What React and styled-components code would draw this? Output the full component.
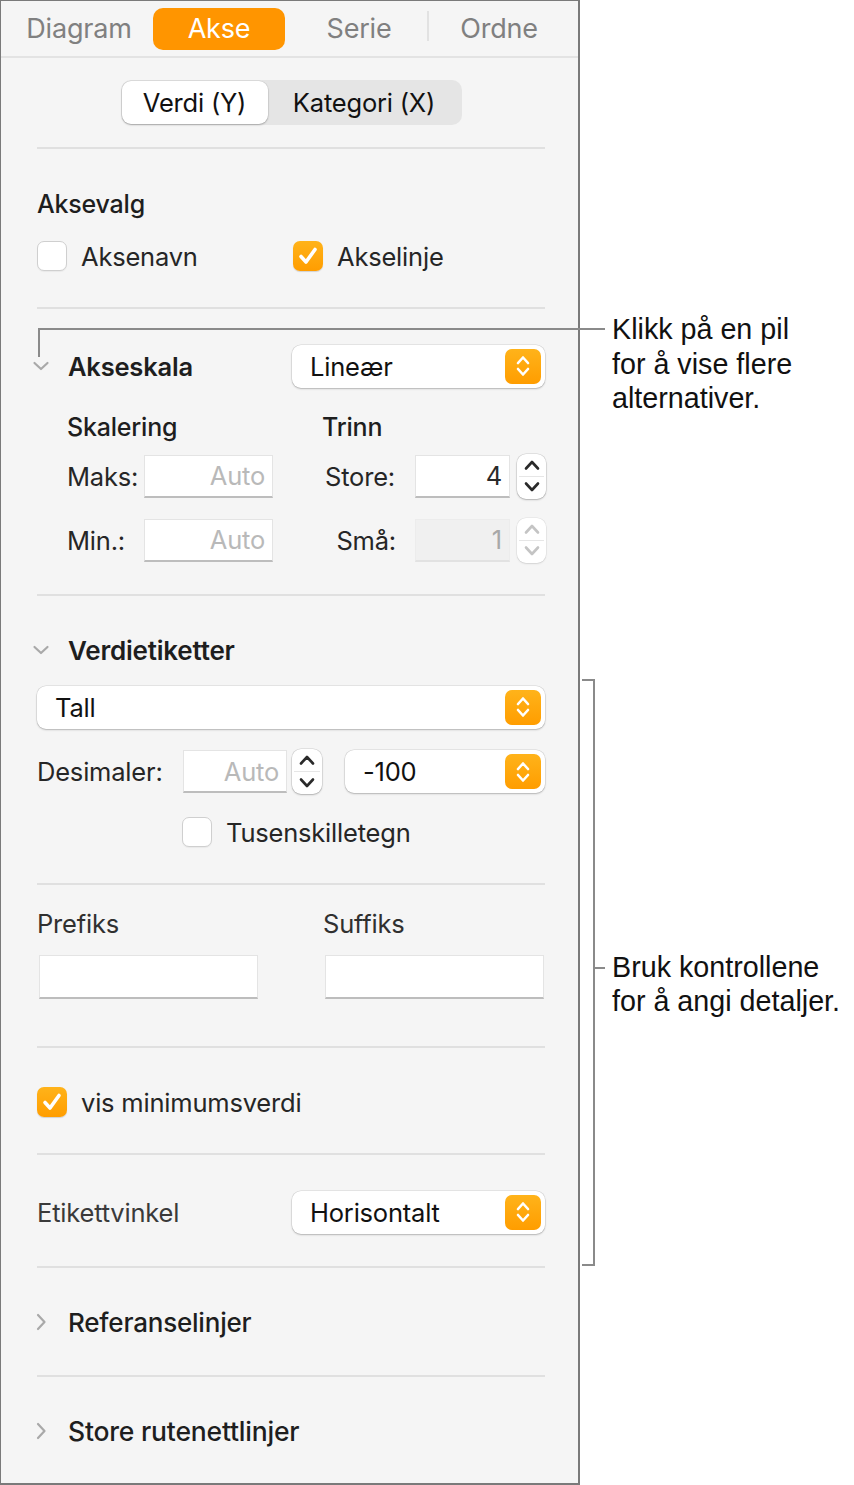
import React from "react";
import styled, { createGlobalStyle } from "styled-components";

const Global = createGlobalStyle`
  html, body { margin: 0; padding: 0; background: #ffffff; }
  body { font-family: Inter, "Noto Sans", sans-serif; -webkit-font-smoothing: antialiased; }
  * { box-sizing: border-box; }
`;

const Page = styled.div`
  display: flex;
  width: 854px;
  height: 1485px;
  background: #fff;
`;

const Panel = styled.div`
  width: 580px;
  height: 1485px;
  flex: none;
  background: #f5f5f5;
  border: 2px solid #7a7a7a;
  border-top-width: 1px;
  border-left-width: 1px;
  display: flex;
  flex-direction: column;
  color: #242424;
  font-size: 25.5px;
  letter-spacing: -0.2px;
`;

const TabBar = styled.div`
  height: 57px;
  flex: none;
  display: flex;
  align-items: center;
  padding-left: 8px;
  border-bottom: 2px solid #e3e3e3;
`;

const Tab = styled.div`
  width: 140px;
  display: flex;
  justify-content: center;
  align-items: center;
  position: relative;
  font-size: 27px;
  color: ${(p) => (p.$active ? "#ffffff" : "#808080")};
  &::after {
    content: "";
    display: ${(p) => (p.$divider ? "block" : "none")};
    position: absolute;
    right: 0;
    top: -1px;
    width: 2px;
    height: 30px;
    background: #e2e2e2;
  }
`;

const TabPill = styled.div`
  width: 132px;
  height: 42px;
  border-radius: 10px;
  background: ${(p) => (p.$active ? "#ff9500" : "transparent")};
  display: flex;
  align-items: center;
  justify-content: center;
`;

const Content = styled.div`
  padding: 0 33px 0 36px;
  display: flex;
  flex-direction: column;
`;

const Section = styled.div`
  display: flex;
  flex-direction: column;
  padding-top: ${(p) => p.$pt}px;
  padding-bottom: ${(p) => p.$pb}px;
  border-bottom: ${(p) => (p.$last ? "none" : "2px solid #e0e0e0")};
`;

const SegWrap = styled.div`
  display: flex;
  justify-content: center;
  padding: 22px 0 22px;
  border-bottom: 2px solid #e0e0e0;
`;

const Segmented = styled.div`
  width: 341px;
  height: 45px;
  border-radius: 10px;
  background: #e5e5e5;
  display: flex;
  align-items: center;
  padding: 1px;
`;

const Segment = styled.div`
  height: 43px;
  width: ${(p) => p.$w}px;
  border-radius: 9px;
  display: flex;
  align-items: center;
  justify-content: center;
  font-size: 25.5px;
  color: #111;
  background: ${(p) => (p.$on ? "#fff" : "transparent")};
  box-shadow: ${(p) => (p.$on ? "0 1px 2px rgba(0,0,0,0.25), 0 0 0 0.5px rgba(0,0,0,0.08)" : "none")};
`;

const Row = styled.div`
  display: flex;
  align-items: center;
  height: ${(p) => p.$h || 30}px;
  margin-top: ${(p) => p.$mt || 0}px;
  padding-left: ${(p) => p.$pl || 0}px;
`;

const Title = styled.div`
  font-weight: ${(p) => p.$w || 500};
  color: ${(p) => p.$c || "#1e1e1e"};
  width: ${(p) => (p.$width ? p.$width + "px" : "auto")};
  font-size: ${(p) => p.$fs || 25}px;
`;

const Label = styled.div`
  color: ${(p) => p.$c || "#262626"};
  width: ${(p) => (p.$width ? p.$width + "px" : "auto")};
  text-align: ${(p) => p.$align || "left"};
  flex: none;
`;

const CheckItem = styled.div`
  display: flex;
  align-items: center;
  gap: 14px;
  width: ${(p) => (p.$width ? p.$width + "px" : "auto")};
  color: #262626;
`;

const Box = styled.div`
  width: 30px;
  height: 30px;
  border-radius: 7px;
  flex: none;
  display: flex;
  align-items: center;
  justify-content: center;
  background: ${(p) => (p.$on ? "linear-gradient(#ffb31a, #ff9d00)" : "#fff")};
  border: ${(p) => (p.$on ? "none" : "1px solid #cfcfcf")};
  box-shadow: ${(p) => (p.$on ? "0 1px 1px rgba(0,0,0,0.15)" : "0 1px 1px rgba(0,0,0,0.05)")};
`;

const Popup = styled.div`
  width: ${(p) => (p.$w ? p.$w + "px" : "auto")};
  flex: ${(p) => (p.$w ? "none" : "1")};
  margin-left: ${(p) => (p.$auto ? "auto" : "0")};
  height: 43px;
  border-radius: 9px;
  background: #fff;
  box-shadow: 0 1px 2px rgba(0,0,0,0.22), 0 0 0 0.5px rgba(0,0,0,0.12);
  display: flex;
  align-items: center;
  justify-content: space-between;
  padding: 0 4px 0 18px;
  color: #111;
  font-size: 25.5px;
`;

const PopupKnob = styled.div`
  width: 36px;
  height: 35px;
  border-radius: 7px;
  background: linear-gradient(#ffb31a, #ff9d00);
  display: flex;
  align-items: center;
  justify-content: center;
`;

const Field = styled.div`
  width: ${(p) => p.$w}px;
  height: ${(p) => p.$h || 43}px;
  flex: none;
  margin-left: ${(p) => p.$ml || 0}px;
  background: ${(p) => (p.$disabled ? "#f0f0f0" : "#fff")};
  border: 1px solid ${(p) => (p.$disabled ? "#ececec" : "#e4e4e4")};
  border-bottom: 2px solid ${(p) => (p.$disabled ? "#e2e2e2" : "#bdbdbd")};
  display: flex;
  align-items: center;
  justify-content: flex-end;
  padding-right: 7px;
  color: ${(p) => (p.$ph ? "#b9b9b9" : p.$disabled ? "#a8a8a8" : "#2a2a2a")};
  font-size: 25.5px;
`;

const Stepper = styled.div`
  width: ${(p) => p.$w || 29}px;
  height: 45px;
  flex: none;
  margin-left: ${(p) => p.$ml || 0}px;
  border-radius: 9px;
  background: #fff;
  box-shadow: 0 1px 2px rgba(0,0,0,${(p) => (p.$disabled ? 0.1 : 0.22)}), 0 0 0 0.5px rgba(0,0,0,${(p) => (p.$disabled ? 0.08 : 0.14)});
  display: flex;
  flex-direction: column;
  align-items: center;
  justify-content: space-around;
  position: relative;
  &::after {
    content: "";
    position: absolute;
    left: 2px;
    right: 2px;
    top: 22px;
    height: 1px;
    background: #e6e6e6;
  }
`;

const ChevSlot = styled.div`
  width: 22px;
  margin-left: -7px;
  margin-right: 16px;
  display: flex;
  justify-content: center;
  align-items: center;
  flex: none;
`;

const Grid2 = styled.div`
  display: grid;
  grid-template-columns: 286px 1fr;
  margin-top: ${(p) => p.$mt || 0}px;
`;

const Flex = styled.div`
  flex: 1;
  display: flex;
  margin-left: ${(p) => p.$ml || 0}px;
`;

const Notes = styled.div`
  flex: 1;
  display: flex;
  flex-direction: column;
  font-family: "Liberation Sans", Arial, sans-serif;
  font-size: 28.7px;
  line-height: 34.5px;
  color: #111;
`;

const Note = styled.div`
  position: relative;
  margin-top: ${(p) => p.$mt}px;
  padding-left: 32px;
  white-space: nowrap;
`;

const Leader = styled.div`
  position: absolute;
  left: -542px;
  top: 16px;
  width: 567px;
  height: 29px;
  border-top: 2px solid #8a8a8a;
  border-left: 2px solid #8a8a8a;
`;

const BracketGroup = styled.div`
  display: flex;
  margin-top: ${(p) => p.$mt}px;
  margin-left: 2px;
`;

const Bracket = styled.div`
  width: 13px;
  height: 587px;
  flex: none;
  border: 2px solid #8a8a8a;
  border-left: none;
  position: relative;
  &::after {
    content: "";
    position: absolute;
    left: 11px;
    top: 286px;
    width: 12px;
    height: 2px;
    background: #8a8a8a;
  }
`;

const BracketText = styled.div`
  margin-top: 271px;
  padding-left: 17px;
  white-space: nowrap;
`;

const Check = () => (
  <svg width="22" height="22" viewBox="0 0 22 22">
    <path d="M4 11.5 L9 17 L18 4.5" fill="none" stroke="#fff" strokeWidth="3.6" strokeLinecap="round" strokeLinejoin="round" />
  </svg>
);

const UpDown = () => (
  <svg width="18" height="26" viewBox="0 0 18 26">
    <path d="M4 10 L9 4.5 L14 10" fill="none" stroke="#fff" strokeWidth="2.6" strokeLinecap="round" strokeLinejoin="round" />
    <path d="M4 16 L9 21.5 L14 16" fill="none" stroke="#fff" strokeWidth="2.6" strokeLinecap="round" strokeLinejoin="round" />
  </svg>
);

const Arrow = ({ up, color }) => (
  <svg width="18" height="12" viewBox="0 0 18 12">
    <path d={up ? "M3 9.5 L9 3 L15 9.5" : "M3 2.5 L9 9 L15 2.5"} fill="none" stroke={color} strokeWidth="2.6" strokeLinecap="round" strokeLinejoin="round" />
  </svg>
);

const NumStepper = ({ disabled, w, ml }) => {
  const c = disabled ? "#c4c4c4" : "#2a2a2a";
  return (
    <Stepper $disabled={disabled} $w={w} $ml={ml}>
      <Arrow up color={c} />
      <Arrow color={c} />
    </Stepper>
  );
};

const Chevron = ({ open }) =>
  open ? (
    <svg width="18" height="12" viewBox="0 0 18 12">
      <path d="M2.5 3 L9 9 L15.5 3" fill="none" stroke="#a9a9a9" strokeWidth="2.2" strokeLinecap="round" strokeLinejoin="round" />
    </svg>
  ) : (
    <svg width="12" height="20" viewBox="0 0 12 20">
      <path d="M3 3 L9.5 10 L3 17" fill="none" stroke="#a9a9a9" strokeWidth="2.2" strokeLinecap="round" strokeLinejoin="round" />
    </svg>
  );

const CheckBox = ({ on }) => <Box $on={on}>{on && <Check />}</Box>;

const PopupButton = ({ children, w, auto }) => (
  <Popup $w={w} $auto={auto}>
    <span>{children}</span>
    <PopupKnob>
      <UpDown />
    </PopupKnob>
  </Popup>
);

export default function App() {
  return (
    <Page>
      <Global />
      <Panel>
        <TabBar>
          <Tab>Diagram</Tab>
          <Tab $active>
            <TabPill $active>Akse</TabPill>
          </Tab>
          <Tab $divider>Serie</Tab>
          <Tab>Ordne</Tab>
        </TabBar>
        <Content>
          <SegWrap>
            <Segmented>
              <Segment $on $w={146}>Verdi (Y)</Segment>
              <Segment $w={193}>Kategori (X)</Segment>
            </Segmented>
          </SegWrap>

          <Section $pt={40} $pb={36}>
            <Row>
              <Title>Aksevalg</Title>
            </Row>
            <Row $mt={22}>
              <CheckItem $width={256}>
                <CheckBox />
                Aksenavn
              </CheckItem>
              <CheckItem>
                <CheckBox on />
                Akselinje
              </CheckItem>
            </Row>
          </Section>

          <Section $pt={35} $pb={31}>
            <Row $h={44}>
              <ChevSlot>
                <Chevron open />
              </ChevSlot>
              <Title $w={600} $fs={25.5}>Akseskala</Title>
              <PopupButton w={253} auto>
                Lineær
              </PopupButton>
            </Row>
            <Row $mt={24} $pl={30}>
              <Title $width={255}>Skalering</Title>
              <Title>Trinn</Title>
            </Row>
            <Row $mt={11} $h={46} $pl={30}>
              <Label $width={77}>Maks:</Label>
              <Field $w={129} $ph>Auto</Field>
              <Label $width={122} $align="right">Store:</Label>
              <Field $w={95} $ml={20}>4</Field>
              <NumStepper ml={7} />
            </Row>
            <Row $mt={18} $h={46} $pl={30}>
              <Label $width={77}>Min.:</Label>
              <Field $w={129} $ph>Auto</Field>
              <Label $width={123} $align="right">Små:</Label>
              <Field $w={95} $ml={19} $disabled>1</Field>
              <NumStepper ml={7} disabled />
            </Row>
          </Section>

          <Section $pt={39} $pb={36}>
            <Row>
              <ChevSlot>
                <Chevron open />
              </ChevSlot>
              <Title $w={600} $fs={26}>Verdietiketter</Title>
            </Row>
            <Row $mt={21} $h={42}>
              <PopupButton>Tall</PopupButton>
            </Row>
            <Row $mt={21} $h={45}>
              <Label $width={146}>Desimaler:</Label>
              <Field $w={104} $ph>Auto</Field>
              <NumStepper ml={5} w={30} />
              <Flex $ml={23}>
                <PopupButton>-100</PopupButton>
              </Flex>
            </Row>
            <Row $mt={23} $pl={145}>
              <CheckItem>
                <CheckBox />
                Tusenskilletegn
              </CheckItem>
            </Row>
          </Section>

          <Section $pt={23} $pb={47}>
            <Grid2>
              <Row>
                <Label $c="#303030">Prefiks</Label>
              </Row>
              <Row>
                <Label $c="#303030">Suffiks</Label>
              </Row>
            </Grid2>
            <Grid2 $mt={17}>
              <Field $w={219} $h={44} $ml={2} />
              <Field $w={219} $h={44} $ml={2} />
            </Grid2>
          </Section>

          <Section $pt={39} $pb={36}>
            <Row>
              <CheckItem>
                <CheckBox on />
                vis minimumsverdi
              </CheckItem>
            </Row>
          </Section>

          <Section $pt={36} $pb={33}>
            <Row $h={42}>
              <Label $c="#3a3a3a">Etikettvinkel</Label>
              <PopupButton w={253} auto>
                Horisontalt
              </PopupButton>
            </Row>
          </Section>

          <Section $pt={39} $pb={38}>
            <Row>
              <ChevSlot>
                <Chevron />
              </ChevSlot>
              <Title $w={500} $fs={26}>Referanselinjer</Title>
            </Row>
          </Section>

          <Section $pt={39} $pb={0} $last>
            <Row>
              <ChevSlot>
                <Chevron />
              </ChevSlot>
              <Title $w={500} $fs={26.5}>Store rutenettlinjer</Title>
            </Row>
          </Section>
        </Content>
      </Panel>
      <Notes>
        <Note $mt={312}>
          <Leader />
          Klikk på en pil
          <br />
          for å vise flere
          <br />
          alternativer.
        </Note>
        <BracketGroup $mt={263}>
          <Bracket />
          <BracketText>
            Bruk kontrollene
            <br />
            for å angi detaljer.
          </BracketText>
        </BracketGroup>
      </Notes>
    </Page>
  );
}
